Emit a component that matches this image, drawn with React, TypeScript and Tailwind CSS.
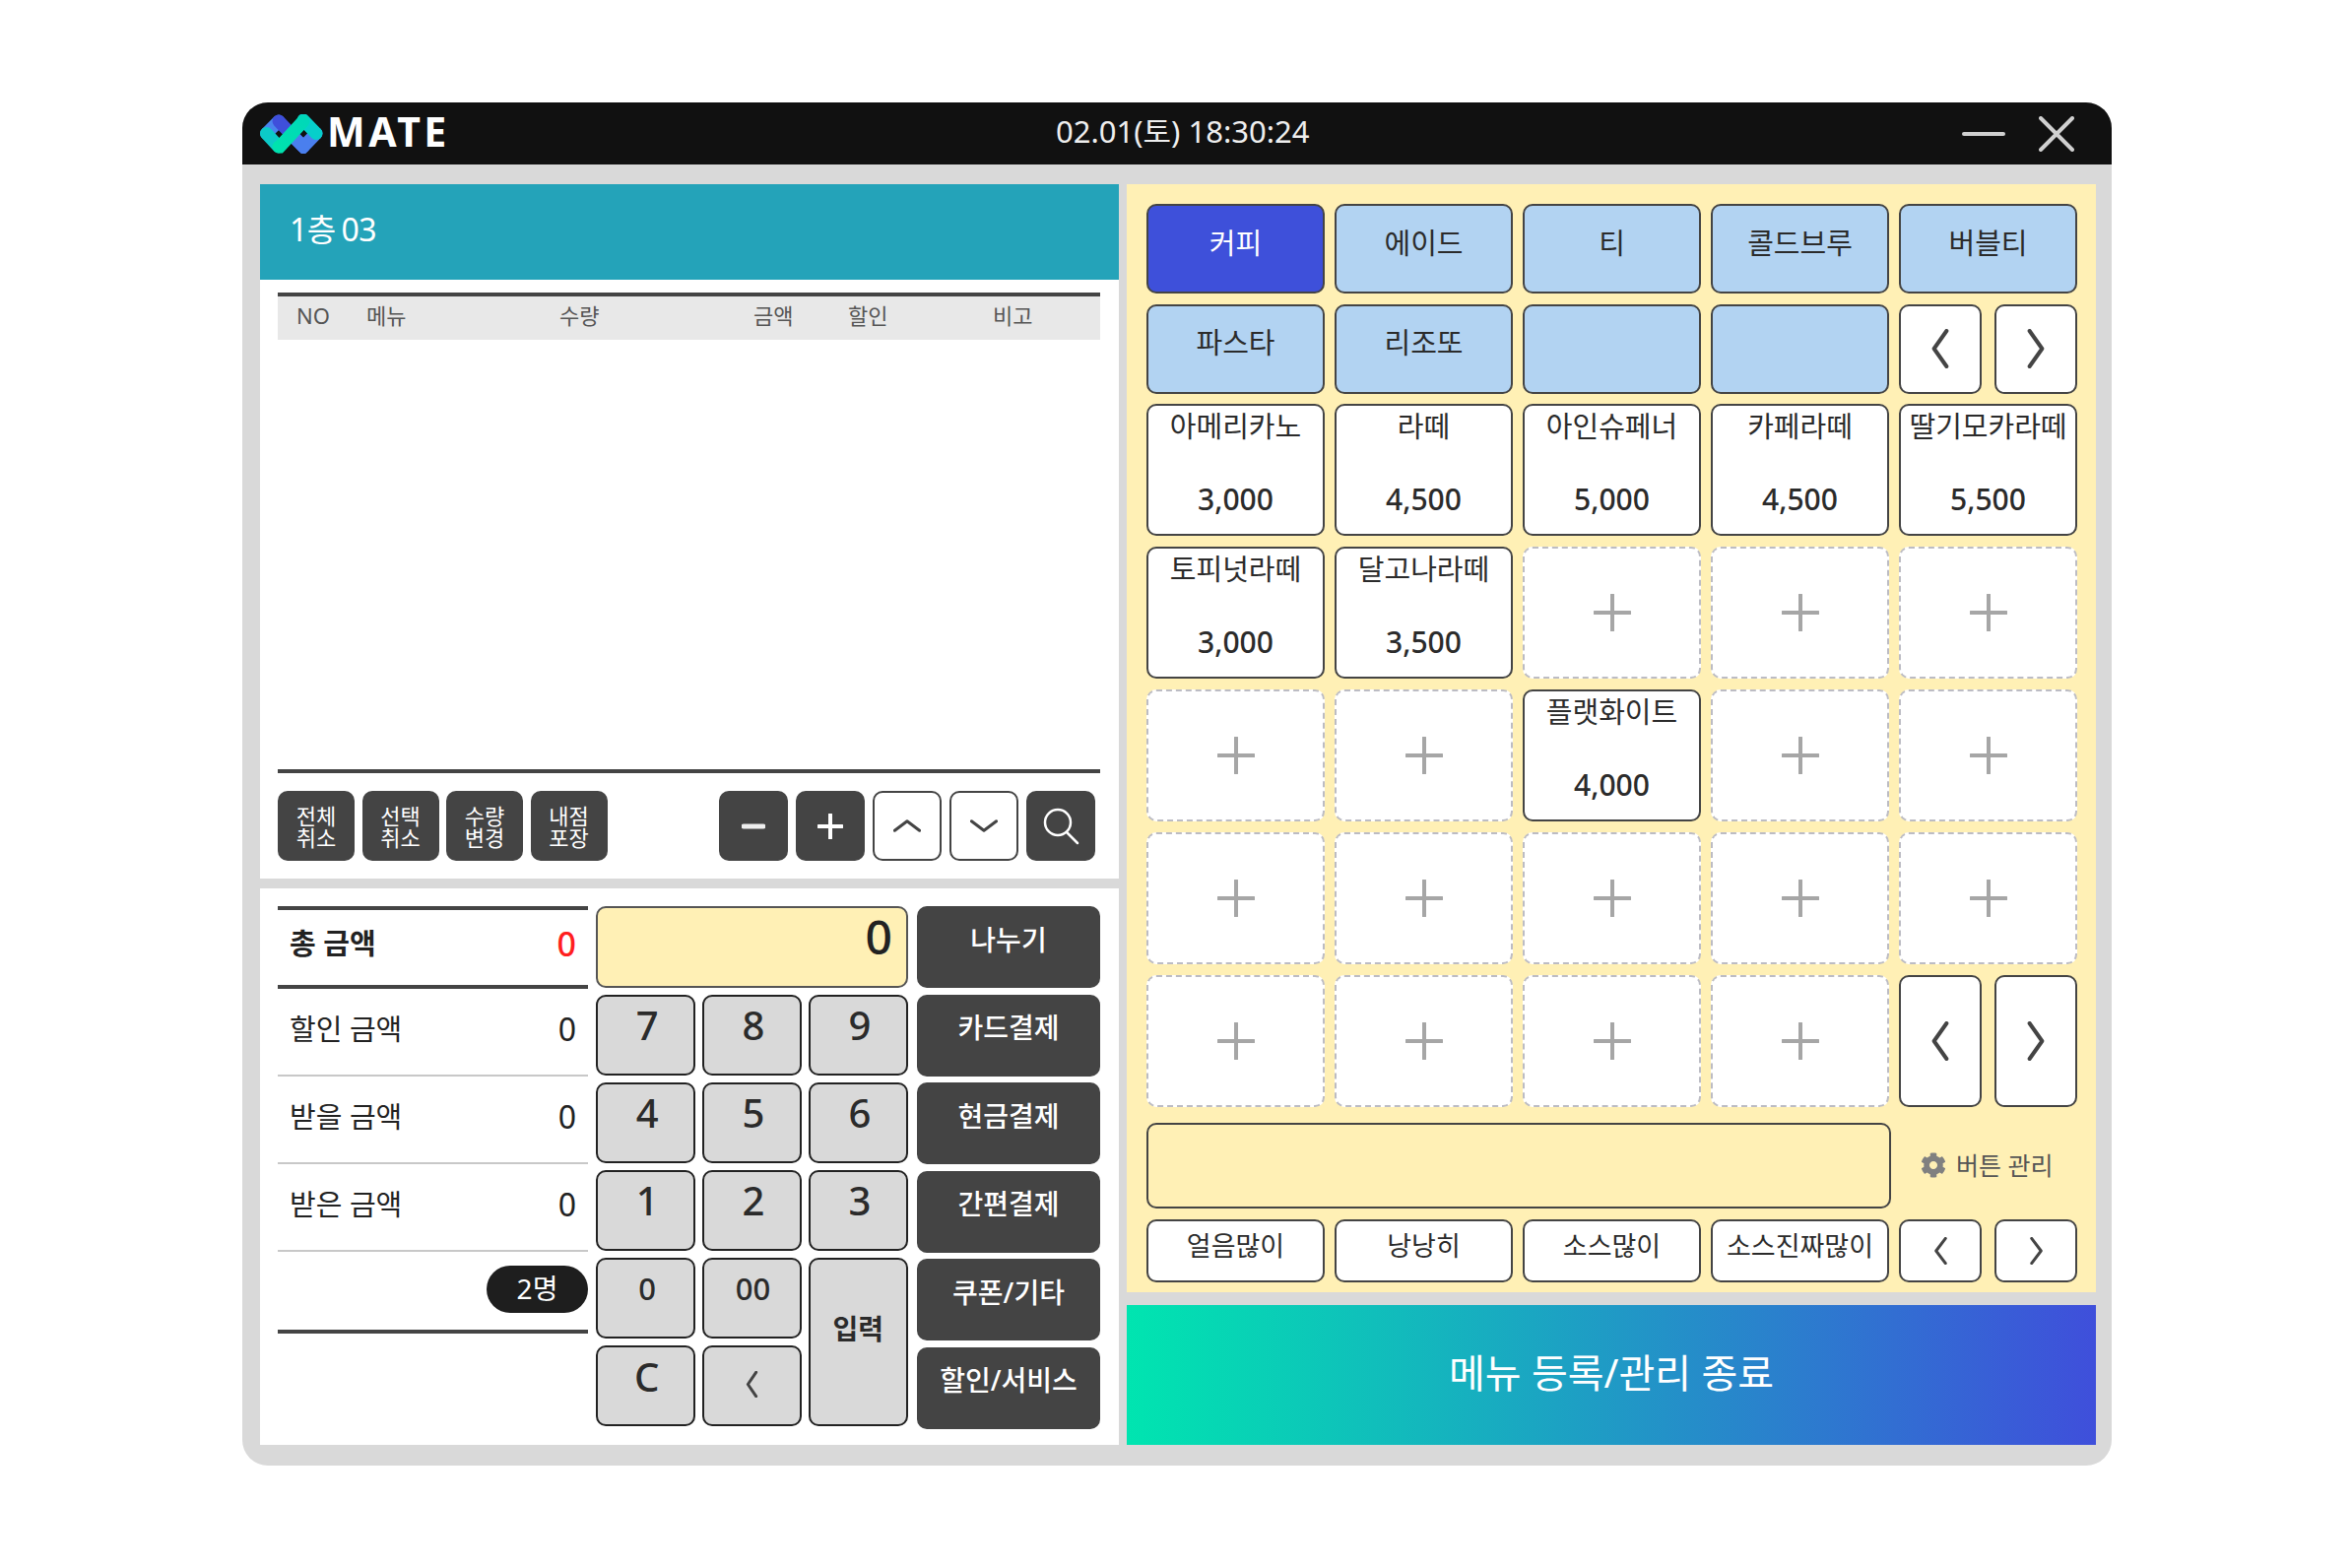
import { FaCog } from 'react-icons/fa';

const FONT = "font-['Noto_Sans','Noto_Sans_CJK_KR',sans-serif]";

type MenuItem = { name: string; price: string } | null;

const categories = ['커피', '에이드', '티', '콜드브루', '버블티', '파스타', '리조또', '', ''];

const menuItems: (MenuItem | 'nav')[] = [
  { name: '아메리카노', price: '3,000' },
  { name: '라떼', price: '4,500' },
  { name: '아인슈페너', price: '5,000' },
  { name: '카페라떼', price: '4,500' },
  { name: '딸기모카라떼', price: '5,500' },
  { name: '토피넛라떼', price: '3,000' },
  { name: '달고나라떼', price: '3,500' },
  null,
  null,
  null,
  null,
  null,
  { name: '플랫화이트', price: '4,000' },
  null,
  null,
  null,
  null,
  null,
  null,
  null,
  null,
  null,
  null,
  null,
  'nav',
];

const options = ['얼음많이', '낭낭히', '소스많이', '소스진짜많이'];
const payButtons = ['나누기', '카드결제', '현금결제', '간편결제', '쿠폰/기타', '할인/서비스'];
const actionButtons = [
  ['전체', '취소'],
  ['선택', '취소'],
  ['수량', '변경'],
  ['내점', '포장'],
];

function Logo() {
  return (
    <svg width="64" height="40" viewBox="8 9 64 40" fill="none" strokeWidth="13" strokeLinecap="round">
      <defs>
        <linearGradient id="ribbon" x1="27" y1="42" x2="52" y2="15" gradientUnits="userSpaceOnUse">
          <stop offset="0" stopColor="#00e2ae" />
          <stop offset="1" stopColor="#00d8b8" />
        </linearGradient>
      </defs>
      <path d="M14.5 28.5L27 16" stroke="#4a84ee" />
      <path d="M27 16L52 42" stroke="#3f4fdb" />
      <path d="M43 33L52 42L65 28.5" stroke="#4a7fee" />
      <path d="M14.5 28.5L27 42" stroke="#0ccac8" />
      <path d="M52 15L65 28.5" stroke="#06cfcb" />
      <path d="M27 42L28 42L52 16" stroke="url(#ribbon)" />
    </svg>
  );
}

function Chevron({ dir, size, width = 3 }: { dir: 'left' | 'right' | 'up' | 'down'; size: [number, number]; width?: number }) {
  const points = {
    left: '18,2 4,20 18,38',
    right: '4,2 18,20 4,38',
    up: '2,18 20,4 38,18',
    down: '2,4 20,18 38,4',
  }[dir];
  const vb = dir === 'left' || dir === 'right' ? '0 0 22 40' : '0 0 40 22';
  return (
    <svg width={size[0]} height={size[1]} viewBox={vb} fill="none" preserveAspectRatio="none">
      <polyline points={points} stroke="#444444" strokeWidth={width} strokeLinecap="round" strokeLinejoin="round" vectorEffect="non-scaling-stroke" />
    </svg>
  );
}

function NavPair({ big }: { big?: boolean }) {
  const size: [number, number] = big ? [20, 40] : [15, 28];
  return (
    <div className="flex h-full gap-[13px]">
      <button className="flex flex-1 items-center justify-center rounded-[10px] border-2 border-[#444444] bg-white">
        <Chevron dir="left" size={size} width={big ? 4 : 3} />
      </button>
      <button className="flex flex-1 items-center justify-center rounded-[10px] border-2 border-[#444444] bg-white">
        <Chevron dir="right" size={size} width={big ? 4 : 3} />
      </button>
    </div>
  );
}

function EmptyCell() {
  return (
    <button className="flex items-center justify-center rounded-[10px] border-2 border-dashed border-[#bcbcc4] bg-white">
      <svg width="38" height="38" viewBox="0 0 38 38">
        <path d="M19 1V37M1 19H37" stroke="#a6a6a6" strokeWidth="4" strokeLinecap="round" />
      </svg>
    </button>
  );
}

function Key({ label, className = '' }: { label: React.ReactNode; className?: string }) {
  return (
    <button className={`flex justify-center rounded-[10px] border-2 border-[#222222] bg-[#d9d9d9] text-[#2b2b2b] ${className}`}>
      {label}
    </button>
  );
}

function TotalRow({ label, value, strong }: { label: string; value: string; strong?: boolean }) {
  return (
    <div
      className={
        strong
          ? 'flex h-[84px] items-center justify-between border-y-4 border-[#444444] pr-[12px] pb-[8px] pl-[12px]'
          : 'flex h-[89px] items-center justify-between border-b-2 border-[#c8c8c8] pr-[12px] pb-[6px] pl-[12px]'
      }
    >
      <span className={`text-[29px] text-[#222222] ${strong ? 'font-bold' : ''}`}>{label}</span>
      <span className={strong ? 'text-[34px] font-medium text-[#ff1f1f]' : 'text-[32px] text-[#222222]'}>{value}</span>
    </div>
  );
}

export default function App() {
  return (
    <div className={`flex h-[1592px] w-[2388px] items-center justify-center bg-white pl-[2px] ${FONT}`}>
      <div className="flex h-[1384px] w-[1898px] flex-col overflow-hidden rounded-[26px] bg-[#d9d9d9]">
        {/* title bar */}
        <div className="flex h-[63px] shrink-0 items-center bg-[#111111] pr-[38px] pl-[18px]">
          <div className="flex w-[690px] items-center gap-[4px]">
            <Logo />
            <span className="pb-[4px] text-[41px] leading-none font-bold tracking-[3.5px] text-white">MATE</span>
          </div>
          <span className="ml-[118px] pb-[4px] text-[31px] text-[#eeeeee]">02.01(토) 18:30:24</span>
          <div className="ml-auto flex items-center gap-[34px]">
            <div className="h-[4px] w-[44px] rounded-full bg-[#d0d0d0]" />
            <svg width="36" height="36" viewBox="0 0 36 36">
              <path d="M2 2L34 34M34 2L2 34" stroke="#d0d0d0" strokeWidth="4" strokeLinecap="round" />
            </svg>
          </div>
        </div>

        {/* body */}
        <div className="flex flex-1 gap-[8px] pt-[20px] pr-[16px] pb-[21px] pl-[18px]">
          {/* left column */}
          <div className="flex w-[872px] flex-col gap-[10px]">
            <div className="flex h-[705px] flex-col bg-white">
              <div className="flex h-[97px] shrink-0 items-center bg-[#24a3b9] pb-[6px] pl-[30px] text-[32px] tracking-[-0.5px] text-white [word-spacing:-2px]">1층 03</div>
              <div className="flex flex-1 flex-col pt-[13px] pr-[19px] pl-[18px]">
                <div className="flex h-[48px] shrink-0 items-center border-t-4 border-[#444444] bg-[#e8e8e8] pb-[5px] text-[22px] text-[#555555]">
                  <span className="w-[90px] pl-[19px]">NO</span>
                  <span className="w-[196px]">메뉴</span>
                  <span className="w-[197px]">수량</span>
                  <span className="w-[96px]">금액</span>
                  <span className="w-[147px]">할인</span>
                  <span>비고</span>
                </div>
                <div className="flex-1" />
                <div className="h-[4px] shrink-0 bg-[#444444]" />
                <div className="mt-[18px] mb-[18px] flex h-[71px] shrink-0 gap-[7.5px]">
                  {actionButtons.map(([a, b]) => (
                    <button key={a} className="flex w-[78px] flex-col items-center justify-center rounded-[10px] bg-[#444444] text-[22px] leading-[22px] text-white">
                      <span>{a}</span>
                      <span>{b}</span>
                    </button>
                  ))}
                  <div className="ml-auto flex gap-[8px] pr-[5.5px]">
                    <button className="flex w-[70px] items-center justify-center rounded-[10px] bg-[#444444]">
                      <svg width="24" height="24" viewBox="0 0 24 24"><path d="M2 12H22" stroke="#eeeeee" strokeWidth="5" strokeLinecap="round" /></svg>
                    </button>
                    <button className="flex w-[70px] items-center justify-center rounded-[10px] bg-[#444444]">
                      <svg width="26" height="26" viewBox="0 0 26 26"><path d="M13 1V25M1 13H25" stroke="white" strokeWidth="4" strokeLinecap="round" /></svg>
                    </button>
                    <button className="flex w-[70px] items-center justify-center rounded-[10px] border-2 border-[#444444] bg-white">
                      <Chevron dir="up" size={[28, 15]} />
                    </button>
                    <button className="flex w-[70px] items-center justify-center rounded-[10px] border-2 border-[#444444] bg-white">
                      <Chevron dir="down" size={[28, 15]} />
                    </button>
                    <button className="flex w-[70px] items-center justify-center rounded-[10px] bg-[#444444]">
                      <svg width="38" height="38" viewBox="0 0 38 38" fill="none" stroke="white" strokeWidth="2.5" strokeLinecap="round">
                        <circle cx="16" cy="15" r="13" />
                        <path d="M25 25L36 36" />
                      </svg>
                    </button>
                  </div>
                </div>
              </div>
            </div>

            <div className="flex flex-1 bg-white pt-[18px] pr-[18px] pl-[18px]">
              <div className="flex w-[315px] flex-col">
                <TotalRow label="총 금액" value="0" strong />
                <TotalRow label="할인 금액" value="0" />
                <TotalRow label="받을 금액" value="0" />
                <TotalRow label="받은 금액" value="0" />
                <div className="flex h-[83px] items-center justify-end border-b-4 border-[#444444] pb-[4px]">
                  <span className="flex h-[48px] w-[103px] items-center justify-center rounded-full bg-[#1e1e1e] pb-[2px] text-[28px] text-white">2명</span>
                </div>
              </div>

              <div className="ml-[8px] flex w-[317px] flex-col gap-[6.5px]">
                <div className="flex h-[83px] shrink-0 justify-end rounded-[10px] border-2 border-[#555555] bg-[#fff0b5] pr-[14px] text-[48px] leading-[58px] font-medium text-[#222222]">0</div>
                <div className="grid h-[439px] grid-cols-3 grid-rows-5 gap-[6.5px]">
                  {['7', '8', '9', '4', '5', '6', '1', '2', '3'].map((n) => (
                    <Key key={n} label={n} className="items-start pl-[3px] text-[40px] leading-[58px] font-medium" />
                  ))}
                  <Key label="0" className="items-start pt-[5px] pl-[3px] text-[31px] leading-[48px] font-medium" />
                  <Key label="00" className="items-start pt-[5px] pl-[2px] text-[31px] leading-[48px] font-medium" />
                  <Key label="입력" className="row-span-2 items-center pb-[28px] text-[28px] font-bold" />
                  <Key label="C" className="items-start pl-[2px] text-[40px] leading-[60px] font-medium" />
                  <Key className="items-start" label={<span className="pt-[24px]"><Chevron dir="left" size={[13, 27]} /></span>} />
                </div>
              </div>

              <div className="ml-[9px] flex w-[186px] flex-col gap-[6.5px]">
                {payButtons.map((p) => (
                  <button key={p} className="flex h-[83px] items-center justify-center rounded-[10px] bg-[#444444] pb-[16px] text-[28px] font-medium text-white">
                    {p}
                  </button>
                ))}
              </div>
            </div>
          </div>

          {/* right column */}
          <div className="flex flex-1 flex-col gap-[13px]">
            <div className="flex h-[1125px] flex-col bg-[#fff0b5] pt-[20px] pl-[20px]">
              <div className="grid grid-cols-[repeat(5,181px)] grid-rows-[91px_91px_repeat(5,134.4px)] gap-x-[10px] gap-y-[10.5px]">
                {categories.map((c, i) => (
                  <button
                    key={i}
                    className={`rounded-[10px] border-2 border-[#444444] pb-[12px] text-[29px] ${i === 0 ? 'bg-[#3e50da] text-white' : 'bg-[#b2d3f2] text-[#2b2b2b]'}`}
                  >
                    {c}
                  </button>
                ))}
                <NavPair big />
                {menuItems.map((m, i) => {
                  if (m === 'nav') return <NavPair key={i} big />;
                  if (!m) return <EmptyCell key={i} />;
                  return (
                    <button key={i} className="flex flex-col items-center justify-between rounded-[10px] border-2 border-[#444444] bg-white pt-[3px] pb-[17px] text-[#2b2b2b]">
                      <span className="text-[29px] leading-[36px] whitespace-nowrap">{m.name}</span>
                      <span className="text-[30px] leading-[36px] font-medium">{m.price}</span>
                    </button>
                  );
                })}
              </div>

              <div className="mt-[16px] flex h-[87px] items-center">
                <div className="h-full w-[756px] rounded-[10px] border-2 border-[#444444]" />
                <div className="ml-[30px] flex items-center gap-[10px] text-[25px] text-[#555555]">
                  <FaCog size={26} color="#808080" />
                  <span>버튼 관리</span>
                </div>
              </div>

              <div className="mt-[11px] grid h-[64px] grid-cols-[repeat(5,181px)] gap-x-[10px]">
                {options.map((o) => (
                  <button key={o} className="rounded-[10px] border-2 border-[#444444] bg-white pb-[10px] text-[27px] whitespace-nowrap text-[#2b2b2b]">
                    {o}
                  </button>
                ))}
                <NavPair />
              </div>
            </div>

            <button className="flex flex-1 items-center justify-center bg-linear-to-r/srgb from-[#00e5b0] to-[#3f4fdb] pb-[4px] text-[40px] text-white">
              메뉴 등록/관리 종료
            </button>
          </div>
        </div>
      </div>
    </div>
  );
}
